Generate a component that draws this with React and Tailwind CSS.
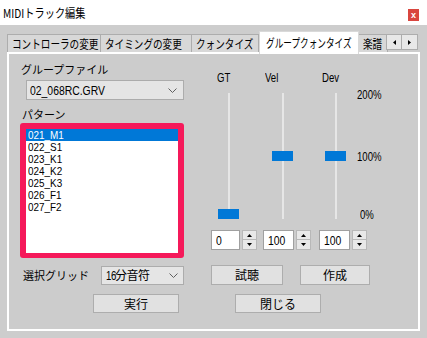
const JP = "font-['Noto_Sans_CJK_JP',sans-serif]";
const LAT = "font-['Liberation_Sans',sans-serif]";

const PATTERNS = ["021_M1", "022_S1", "023_K1", "024_K2", "025_K3", "026_F1", "027_F2"];

function Narrow({ children, className = "" }) {
  return (
    <span className={`${LAT} inline-block origin-left scale-x-80 whitespace-nowrap ${className}`}>
      {children}
    </span>
  );
}

function Chevron() {
  return (
    <svg width="9" height="5" viewBox="0 0 9 5" className="shrink-0">
      <polyline points="0.5,0.5 4.5,4.5 8.5,0.5" fill="none" stroke="#606060" strokeWidth="1" />
    </svg>
  );
}

function Button({ label, className = "" }) {
  return (
    <div
      className={`${JP} flex items-center justify-center bg-[#e1e1e1] border border-[#adadad] text-[12px] leading-none ${className}`}
    >
      {label}
    </div>
  );
}

function Slider({ value }) {
  const top = 116 - value * 0.58;
  return (
    <div className="relative w-[22px] h-[126px] mt-[4px]">
      <div className="absolute left-[10px] top-0 w-[2px] h-full bg-[#e6e6e6]" />
      <div className="absolute left-0 w-[21px] h-[10px] bg-[#0078d7]" style={{ top }} />
    </div>
  );
}

function Spin({ value, width }) {
  return (
    <div className="flex">
      <div className={`h-[20px] bg-white border border-[#a0a0a0] pl-[4px] flex items-center ${width}`}>
        <Narrow className="text-[13px] leading-none">{value}</Narrow>
      </div>
      <div className="ml-[2px] w-[15px] h-[20px] flex flex-col">
        <div className="h-[10px] bg-[#e8e8e8] border border-[#b8b8b8] flex items-center justify-center">
          <svg width="5" height="3" viewBox="0 0 5 3"><polygon points="2.5,0 5,3 0,3" fill="#000" /></svg>
        </div>
        <div className="h-[10px] bg-[#e8e8e8] border border-[#b8b8b8] border-t-0 flex items-center justify-center">
          <svg width="5" height="3" viewBox="0 0 5 3"><polygon points="0,0 5,0 2.5,3" fill="#000" /></svg>
        </div>
      </div>
    </div>
  );
}

function Tab({ label, width, active }) {
  if (active) {
    return (
      <div
        className={`relative z-10 -mb-[2px] h-[23px] bg-white border border-b-0 border-[#d9d9d9] flex items-start pt-[4px] pl-[6px] ${width}`}
      >
        <span className="inline-block origin-left scale-x-72 whitespace-nowrap text-[12px] leading-[14px]">{label}</span>
      </div>
    );
  }
  return (
    <div
      className={`h-[18px] bg-[#d8d8d8] border border-b-0 border-[#adadad] -ml-px first:ml-0 flex items-center pl-[4px] overflow-hidden ${width}`}
    >
      <span className="inline-block origin-left scale-x-80 whitespace-nowrap text-[12px] leading-[14px]">{label}</span>
    </div>
  );
}

export default function App() {
  return (
    <div className={`${JP} w-[427px] h-[338px] bg-[#cdcdcd] overflow-hidden text-black relative`}>
      {/* title bar */}
      <div className="h-[25px] bg-white flex items-center pl-[3px]">
        <span className="inline-block origin-left scale-x-85 whitespace-nowrap text-[12px]">MIDIトラック編集</span>
      </div>
      <div className="absolute left-[408px] top-[9px] w-[11px] h-[12px] bg-[#d9463f] flex items-center justify-center text-white text-[9px] leading-none font-bold font-['Liberation_Sans',sans-serif]">
        x
      </div>

      {/* tabs */}
      <div className="flex items-end h-[21px] mt-[6px] ml-[7px] w-[413px]">
        <Tab label="コントローラの変更" width="w-[94px]" />
        <Tab label="タイミングの変更" width="w-[92px]" />
        <Tab label="クォンタイズ" width="w-[68px]" />
        <Tab label="グループクォンタイズ" width="w-[100px]" active />
        <Tab label="楽譜" width="w-[30px]" />
        <div className="self-start mt-[3px] -ml-[2px] flex">
          <div className="w-[16px] h-[16px] bg-[#e8e8e8] border border-[#adadad] flex items-center justify-center">
            <svg width="3" height="5" viewBox="0 0 3 5"><polygon points="3,0 3,5 0,2.5" fill="#000" /></svg>
          </div>
          <div className="w-[16px] h-[16px] bg-[#e8e8e8] border border-[#adadad] border-l-0 flex items-center justify-center">
            <svg width="3" height="5" viewBox="0 0 3 5"><polygon points="0,0 3,2.5 0,5" fill="#000" /></svg>
          </div>
        </div>
      </div>

      {/* panel */}
      <div className="ml-[7px] w-[413px] h-[279px] bg-[#cccccc] border-2 border-white flex flex-col">
        <div className="flex h-[204px]">
          {/* left column */}
          <div className="ml-[11px] w-[164px] flex flex-col">
            <div className="mt-[7px] ml-[1px] h-[16px] leading-[16px] text-[11px]">グループファイル</div>
            <div className="mt-[3px] ml-[6px] w-[158px] h-[20px] bg-[#e5e5e5] border border-[#acacac] flex items-center pl-[3px] pr-[6px]">
              <Narrow className="text-[13px] leading-none">02_068RC.GRV</Narrow>
              <div className="ml-auto"><Chevron /></div>
            </div>
            <div className="mt-[6px] ml-[2px] h-[16px] leading-[16px] text-[11px]">パターン</div>
            <div className="mt-[1px] h-[135px] w-[164px] bg-[#f5195a] rounded-[3px] pt-[6px] pb-[5px] px-[6px]">
              <div className="bg-white h-full">
                {PATTERNS.map((p, i) => (
                  <div
                    key={p}
                    className={`h-[12px] pl-[2px] ${i === 0 ? "bg-[#0078d7] text-white" : ""}`}
                  >
                    <span className={`${LAT} block origin-left scale-x-90 whitespace-nowrap text-[11px] leading-[12px]`}>{p}</span>
                  </div>
                ))}
              </div>
            </div>
          </div>

          {/* right column */}
          <div className="ml-[26px] flex flex-col">
            <div className="mt-[16px] h-[14px] flex text-[12px] leading-[14px]">
              <div className="w-[55px] pl-[7px]"><Narrow>GT</Narrow></div>
              <div className="w-[57px]"><Narrow>Vel</Narrow></div>
              <div><Narrow>Dev</Narrow></div>
            </div>
            <div className="mt-[5px] flex">
              <div className="ml-[8px]"><Slider value={0} /></div>
              <div className="ml-[32px]"><Slider value={100} /></div>
              <div className="ml-[31px]"><Slider value={100} /></div>
              <div className="ml-[10px] flex flex-col text-[12px] leading-[12px]">
                <Narrow>200%</Narrow>
                <Narrow className="mt-[50px]">100%</Narrow>
                <Narrow className="mt-[46px] ml-[3px]">0%</Narrow>
              </div>
            </div>
            <div className="mt-[9px] flex">
              <div className="ml-[1px]"><Spin value="0" width="w-[29px]" /></div>
              <div className="ml-[6px]"><Spin value="100" width="w-[31px]" /></div>
              <div className="ml-[8px]"><Spin value="100" width="w-[31px]" /></div>
            </div>
          </div>
        </div>

        <div className="mt-[7px] h-[20px] flex items-center">
          <div className="ml-[14px] w-[78px] text-[11px]">選択グリッド</div>
          <div className="w-[83px] h-[19px] bg-[#e5e5e5] border border-[#acacac] flex items-center pl-[4px] pr-[5px] text-[12px] leading-none">
            <span className="tracking-[-0.5px]"><span className={`${LAT} inline-block scale-x-80 origin-left w-[9px]`}>16</span>分音符</span>
            <div className="ml-auto"><Chevron /></div>
          </div>
          <Button label="試聴" className="ml-[27px] w-[72px] h-[20px]" />
          <Button label="作成" className="ml-[17px] w-[70px] h-[20px]" />
        </div>

        <div className="mt-[9px] flex">
          <Button label="実行" className="ml-[84px] w-[86px] h-[19px]" />
          <Button label="閉じる" className="ml-[56px] w-[86px] h-[19px]" />
        </div>
      </div>
    </div>
  );
}
